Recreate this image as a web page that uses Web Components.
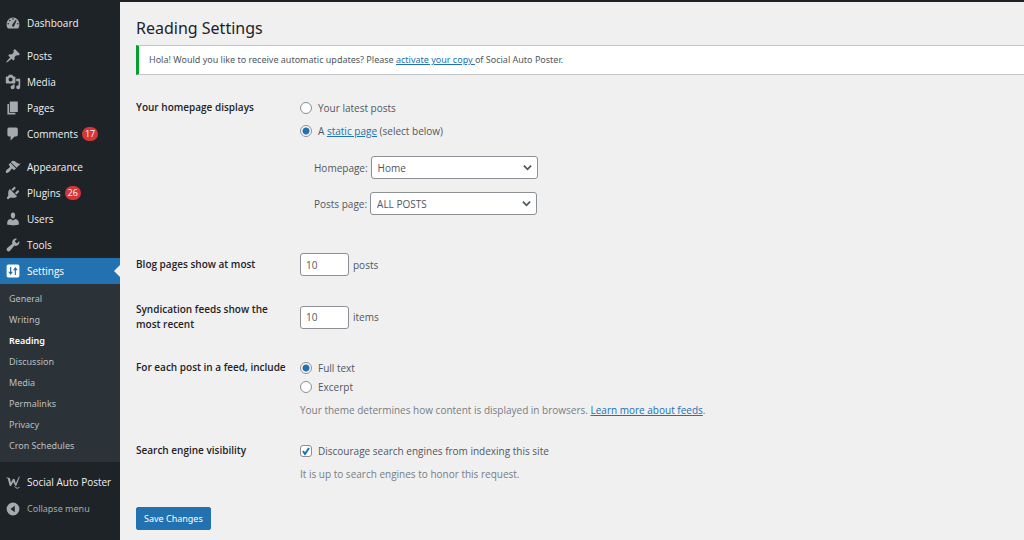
<!DOCTYPE html>
<html lang="en">
<head>
<meta charset="utf-8">
<title>Reading Settings</title>
<style>
  html, body { margin: 0; min-height: 100%; background: #f0f0f1; }
  body { font: 10px/14px "Open Sans", "Noto Sans", sans-serif; color: #50575e; }
</style>
</head>
<body>
<admin-layout>
  <admin-menu slot="menu"></admin-menu>
  <reading-settings></reading-settings>
</admin-layout>

<script>
const ICONS = {
  dashboard: '<path fill-rule="evenodd" d="M3.76 17h12.48c1.1-1.46 1.76-3.27 1.76-5.24 0-4.84-3.58-8.76-8-8.76s-8 3.92-8 8.76c0 1.97.66 3.78 1.76 5.24zM10 4c.55 0 1 .45 1 1s-.45 1-1 1-1-.45-1-1 .45-1 1-1zM6 6c.55 0 1 .45 1 1s-.45 1-1 1-1-.45-1-1 .45-1 1-1zM13.500 6l1 .7-3 7c-.5 1.300-2 1.300-2.500 0-.3-.9 0-1.500.5-2zM4 10c.55 0 1 .45 1 1s-.45 1-1 1-1-.45-1-1 .45-1 1-1zm12 0c.55 0 1 .45 1 1s-.45 1-1 1-1-.45-1-1 .45-1 1-1z"/>',
  post: '<path d="M10.44 3.02l1.82-1.82 6.36 6.35-1.83 1.82c-1.05-.68-2.48-.57-3.41.36l-.75.75c-.92.93-1.04 2.35-.35 3.41l-1.83 1.82-2.41-2.41-2.8 2.79c-.42.42-3.38 2.71-3.8 2.29s1.86-3.39 2.28-3.81l2.79-2.79L4.1 9.36l1.83-1.82c1.05.69 2.48.57 3.4-.36l.75-.75c.93-.92 1.05-2.35.36-3.41z"/>',
  media: '<path fill-rule="evenodd" d="M13 11V4c0-.55-.45-1-1-1h-1.67L9 1H5L3.67 3H2c-.55 0-1 .45-1 1v7c0 .55.45 1 1 1h10c.55 0 1-.45 1-1zM7 4.500c1.38 0 2.500 1.120 2.500 2.500S8.380 9.500 7 9.500 4.500 8.380 4.500 7 5.620 4.500 7 4.500zM14 6h5v10.500c0 1.380-1.120 2.500-2.500 2.500S14 17.880 14 16.500s1.120-2.500 2.500-2.500c.17 0 .34.02.5.05V9h-3V6zm-4 8.050V13h2v3.500c0 1.380-1.120 2.500-2.500 2.500S7 17.880 7 16.500 8.120 14 9.500 14c.17 0 .34.02.5.05z"/>',
  page: '<path d="M6 15V2h10v13H6zm-1 1h8v2H3V5h2v11z"/>',
  comments: '<path d="M5 2h9c1.1 0 2 .9 2 2v7c0 1.100-.9 2-2 2h-2l-5 5v-5H5c-1.100 0-2-.9-2-2V4c0-1.100.9-2 2-2z"/>',
  appearance: '<path d="M14.480 11.060L7.410 3.990l1.500-1.500c.5-.56 2.300-.47 3.510.32 1.210.8 1.430 1.280 2.910 2.100 1.180.64 2.450 1.260 4.450.85zm-.71.71L6.700 4.700 4.930 6.470c-.39.39-.39 1.020 0 1.410l1.060 1.060c.39.39.39 1.030 0 1.420-.6.6-1.430 1.110-2.210 1.690-.35.26-.7.53-1.010.84C1.430 14.230.4 16.080 1.400 17.070c.99 1 2.840-.03 4.180-1.360.31-.31.58-.66.85-1.020.57-.78 1.080-1.610 1.690-2.210.39-.39 1.020-.39 1.410 0l1.060 1.060c.39.39 1.020.39 1.410 0z"/>',
  plugins: '<path d="M13.110 4.360L9.870 7.600 8 5.730l3.240-3.240c.35-.34 1.050-.2 1.560.32.52.51.66 1.210.31 1.550zm-8 1.770l.91-1.120 9.010 9.010-1.190.84c-.71.71-2.630 1.160-3.820 1.160H6.140L4.900 17.260c-.59.59-1.540.59-2.120 0-.59-.58-.59-1.530 0-2.120l1.240-1.240v-3.880c0-1.130.4-3.190 1.090-3.890zm7.260 3.970l3.240-3.240c.34-.35 1.040-.21 1.550.31.52.51.66 1.210.31 1.550l-3.240 3.250z"/>',
  users: '<path d="M10 9.250c-2.270 0-2.730-3.440-2.730-3.440C7 4.020 7.820 2 9.970 2c2.160 0 2.980 2.020 2.710 3.810 0 0-.41 3.440-2.680 3.440zm0 2.570L12.720 10c2.390 0 4.520 2.330 4.520 4.530v2.490s-3.650 1.130-7.240 1.130c-3.650 0-7.240-1.130-7.240-1.130v-2.490c0-2.250 1.940-4.480 4.470-4.480z"/>',
  tools: '<path d="M16.680 9.770c-1.340 1.340-3.300 1.670-4.950.99l-5.410 6.520c-.99.99-2.590.99-3.580 0s-.99-2.590 0-3.570l6.520-5.420c-.68-1.650-.35-3.610.99-4.950 1.280-1.280 3.120-1.620 4.720-1.060l-2.890 2.890 2.820 2.820 2.860-2.870c.53 1.580.18 3.390-1.080 4.650z"/>',
  settings: '<path fill-rule="evenodd" d="M18 16V4c0-1.100-.9-2-2-2H4c-1.100 0-2 .9-2 2v12c0 1.100.9 2 2 2h12c1.100 0 2-.9 2-2zM6.300 5h1.500v6H10l-2.950 4L4 11h2.300zM12.200 15h1.500V9H16l-3.050-4L10 9h2.200z"/>',
  poster: '<path d="M1 4l5 1 1.500 6L10 6l2 .5 1.500 5L17.500 3l1 .5L14 15l-1.500-.5L10.500 10 7.500 15H6L3.500 6z"/><path d="M12 15q3 3.500 6 1l.5.5q-3.500 4-7-.8z"/>',
  collapse: '<path fill-rule="evenodd" d="M10 2a8 8 0 1 0 0 16 8 8 0 1 0 0-16zM12.200 6v8L7 10z"/>'
};

const define = (name, html, setup) => {
  const template = document.createElement('template');
  template.innerHTML = html;
  customElements.define(name, class extends HTMLElement {
    connectedCallback() {
      if (this.shadowRoot) return;
      this.attachShadow({ mode: 'open' }).append(template.content.cloneNode(true));
      if (setup) setup(this, this.shadowRoot);
    }
  });
};

define('menu-icon', `
  <style>
    :host { display: block; flex: none; width: 16px; height: 16px; }
    svg { display: block; width: 100%; height: 100%; fill: currentColor; }
  </style>
  <svg viewBox="0 0 20 20" aria-hidden="true"></svg>`,
  (host, root) => { root.querySelector('svg').innerHTML = ICONS[host.getAttribute('name')]; });

define('menu-badge', `
  <style>
    :host { display: block; min-width: 10px; padding: 0 3px; border-radius: 7px; background: #d63638;
            color: #fff; font-size: 9px; line-height: 14px; text-align: center; }
  </style>
  <slot></slot>`);

define('menu-item', `
  <style>
    :host { display: block; }
    a { display: flex; align-items: center; gap: 4px; height: 26px; padding-left: 5px;
        color: #f0f0f1; text-decoration: none; white-space: nowrap; }
    menu-icon { margin-right: 2px; color: #a7aaad; }
    :host([current]) a { position: relative; background: #2271b1; color: #fff; }
    :host([current]) menu-icon { color: #fff; }
    :host([current]) a::after { content: ""; position: absolute; right: 0; top: 7px;
        border: 6px solid transparent; border-left: 0; border-right-color: #f0f0f1; }
  </style>
  <a href="#"><menu-icon></menu-icon><slot></slot></a>`,
  (host, root) => {
    const icon = document.createElement('menu-icon');
    icon.setAttribute('name', host.getAttribute('icon'));
    root.querySelector('menu-icon').replaceWith(icon);
    if (host.hasAttribute('current')) root.querySelector('a').setAttribute('aria-current', 'true');
  });

define('sub-item', `
  <style>
    :host { display: block; }
    a { display: block; padding-left: 9px; font: 9px/21px "Noto Sans", sans-serif; color: #bdbfc1; text-decoration: none; }
    :host([current]) a { color: #fff; font-weight: 600; }
  </style>
  <a href="#"><slot></slot></a>`);

define('admin-menu', `
  <style>
    :host { display: block; box-sizing: border-box; min-height: 100%; padding-top: 8px; background: #1d2327; }
    nav { display: grid; gap: 7px; }
    .sub { padding: 4px 0 6px; background: #2c3338; }
    button { display: flex; align-items: center; gap: 6px; width: 100%; height: 28px; margin: 0; padding: 0 0 0 5px;
             border: 0; background: none; color: #a7aaad; font: 9px/14px "Noto Sans", sans-serif; }
  </style>
  <nav aria-label="Main menu">
    <menu-item icon="dashboard">Dashboard</menu-item>
    <div>
      <menu-item icon="post">Posts</menu-item>
      <menu-item icon="media">Media</menu-item>
      <menu-item icon="page">Pages</menu-item>
      <menu-item icon="comments">Comments <menu-badge>17</menu-badge></menu-item>
    </div>
    <div>
      <menu-item icon="appearance">Appearance</menu-item>
      <menu-item icon="plugins">Plugins <menu-badge>26</menu-badge></menu-item>
      <menu-item icon="users">Users</menu-item>
      <menu-item icon="tools">Tools</menu-item>
      <menu-item icon="settings" current>Settings</menu-item>
      <div class="sub">
        <sub-item>General</sub-item>
        <sub-item>Writing</sub-item>
        <sub-item current>Reading</sub-item>
        <sub-item>Discussion</sub-item>
        <sub-item>Media</sub-item>
        <sub-item>Permalinks</sub-item>
        <sub-item>Privacy</sub-item>
        <sub-item>Cron Schedules</sub-item>
      </div>
    </div>
    <div>
      <menu-item icon="poster">Social Auto Poster</menu-item>
      <button type="button"><menu-icon name="collapse"></menu-icon>Collapse menu</button>
    </div>
  </nav>`);

define('admin-notice', `
  <style>
    :host { display: block; padding: 7px 10px; border: 1px solid #c3c4c7; border-left: 3px solid #00a32a;
            border-right: 0; background: #fff; font: 9px/14px "Noto Sans", sans-serif; }
  </style>
  <slot></slot>`);

define('form-row', `
  <style>
    :host { display: grid; grid-template-columns: 164px minmax(0, 1fr); }
    :host([centered]) { align-items: center; }
    .label { padding-right: 8px; color: #1d2327; font-weight: 600; line-height: 15px; }
  </style>
  <div class="label"><slot name="label"></slot></div>
  <div><slot></slot></div>`);

define('reading-settings', `
  <style>
    :host { display: block; padding: 15px 0 10px 16px; }
    h1 { margin: 0 0 6px; font: 400 16px/22px "Noto Sans", sans-serif; color: #1d2327; }
    a { color: #2271b1; }
    form { display: block; padding-top: 25px; }
    fieldset { min-width: 0; margin: 0; padding: 0; border: 0; }
    .choice { display: flex; align-items: center; gap: 6px; line-height: 16px; }
    .choice + .choice { margin-top: 3px; }
    .spaced .choice + .choice { margin-top: 7px; }
    input, select { margin: 0; box-sizing: border-box; border: 1px solid #8c8f94; background-color: #fff;
                    color: #50575e; font: inherit; border-radius: 3px; }
    [type=radio], [type=checkbox] { appearance: none; flex: none; width: 12px; height: 12px; }
    [type=radio] { border-radius: 50%; }
    [type=radio]:checked { background: radial-gradient(circle, #2271b1 3px, #fff 4px); }
    [type=checkbox]:checked { background: #fff url("data:image/svg+xml,%3Csvg xmlns='http://www.w3.org/2000/svg' viewBox='0 0 10 10'%3E%3Cpath d='M2 5l2 3 4-6' fill='none' stroke='%232271b1' stroke-width='2'/%3E%3C/svg%3E") center / 10px 10px no-repeat; }
    .pick { display: flex; align-items: center; gap: 3px; margin: 17px 0 0 14px; }
    .pick + .pick { margin-top: 13px; }
    select { appearance: none; width: 167px; height: 23px; padding: 0 20px 0 6px;
             background: #fff url("data:image/svg+xml,%3Csvg xmlns='http://www.w3.org/2000/svg' viewBox='0 0 10 10'%3E%3Cpath d='M1 3l4 4 4-4' fill='none' stroke='%2350575e' stroke-width='2'/%3E%3C/svg%3E") right 5px center / 9px 9px no-repeat; }
    .count { display: flex; align-items: center; gap: 4px; }
    [type=number] { appearance: textfield; width: 49px; height: 23px; padding: 0 5px; }
    .note { margin: 8px 0 0; color: #787c82; line-height: 14px; }
    button { display: block; height: 23px; padding: 0 7px; border: 1px solid #2271b1; border-radius: 2px;
             background: #2271b1; color: #fff; font: 9px/14px "Noto Sans", sans-serif; }
    form-row { margin-bottom: 26px; }
    form-row:nth-child(1) { margin-bottom: 38px; }
    form-row:nth-child(3) { margin-bottom: 28px; }
  </style>
  <h1>Reading Settings</h1>
  <admin-notice>Hola! Would you like to receive automatic updates? Please <a href="#">activate your copy </a>of Social Auto Poster.</admin-notice>
  <form>
    <div class="rows">
      <form-row>
        <span slot="label" id="home-legend">Your homepage displays</span>
        <fieldset class="spaced" aria-labelledby="home-legend">
          <div class="choice"><input type="radio" name="front" id="latest"><label for="latest">Your latest posts</label></div>
          <div class="choice"><input type="radio" name="front" id="static" checked><label for="static">A <a href="#">static page</a> (select below)</label></div>
          <div class="pick"><label for="homepage">Homepage:</label><select id="homepage"><option>Home</option></select></div>
          <div class="pick"><label for="posts-page">Posts page:</label><select id="posts-page"><option>ALL POSTS</option></select></div>
        </fieldset>
      </form-row>
      <form-row centered>
        <label slot="label" for="per-page">Blog pages show at most</label>
        <div class="count"><input type="number" id="per-page" value="10"><span>posts</span></div>
      </form-row>
      <form-row centered>
        <label slot="label" for="per-feed">Syndication feeds show the most recent</label>
        <div class="count"><input type="number" id="per-feed" value="10"><span>items</span></div>
      </form-row>
      <form-row>
        <span slot="label" id="feed-legend">For each post in a feed, include</span>
        <fieldset aria-labelledby="feed-legend">
          <div class="choice"><input type="radio" name="feed" id="full" checked><label for="full">Full text</label></div>
          <div class="choice"><input type="radio" name="feed" id="excerpt"><label for="excerpt">Excerpt</label></div>
          <p class="note">Your theme determines how content is displayed in browsers. <a href="#">Learn more about feeds</a>.</p>
        </fieldset>
      </form-row>
      <form-row>
        <span slot="label" id="seo-legend">Search engine visibility</span>
        <fieldset aria-labelledby="seo-legend">
          <div class="choice"><input type="checkbox" id="discourage" checked><label for="discourage">Discourage search engines from indexing this site</label></div>
          <p class="note">It is up to search engines to honor this request.</p>
        </fieldset>
      </form-row>
    </div>
    <button type="button">Save Changes</button>
  </form>`);

define('admin-layout', `
  <style>
    :host { display: grid; grid-template-columns: 120px minmax(0, 1fr); box-sizing: border-box; min-height: 100vh;
            border-top: 2px solid #1d2327; }
    main { min-width: 0; }
  </style>
  <slot name="menu"></slot>
  <main><slot></slot></main>`);
</script>
</body>
</html>
